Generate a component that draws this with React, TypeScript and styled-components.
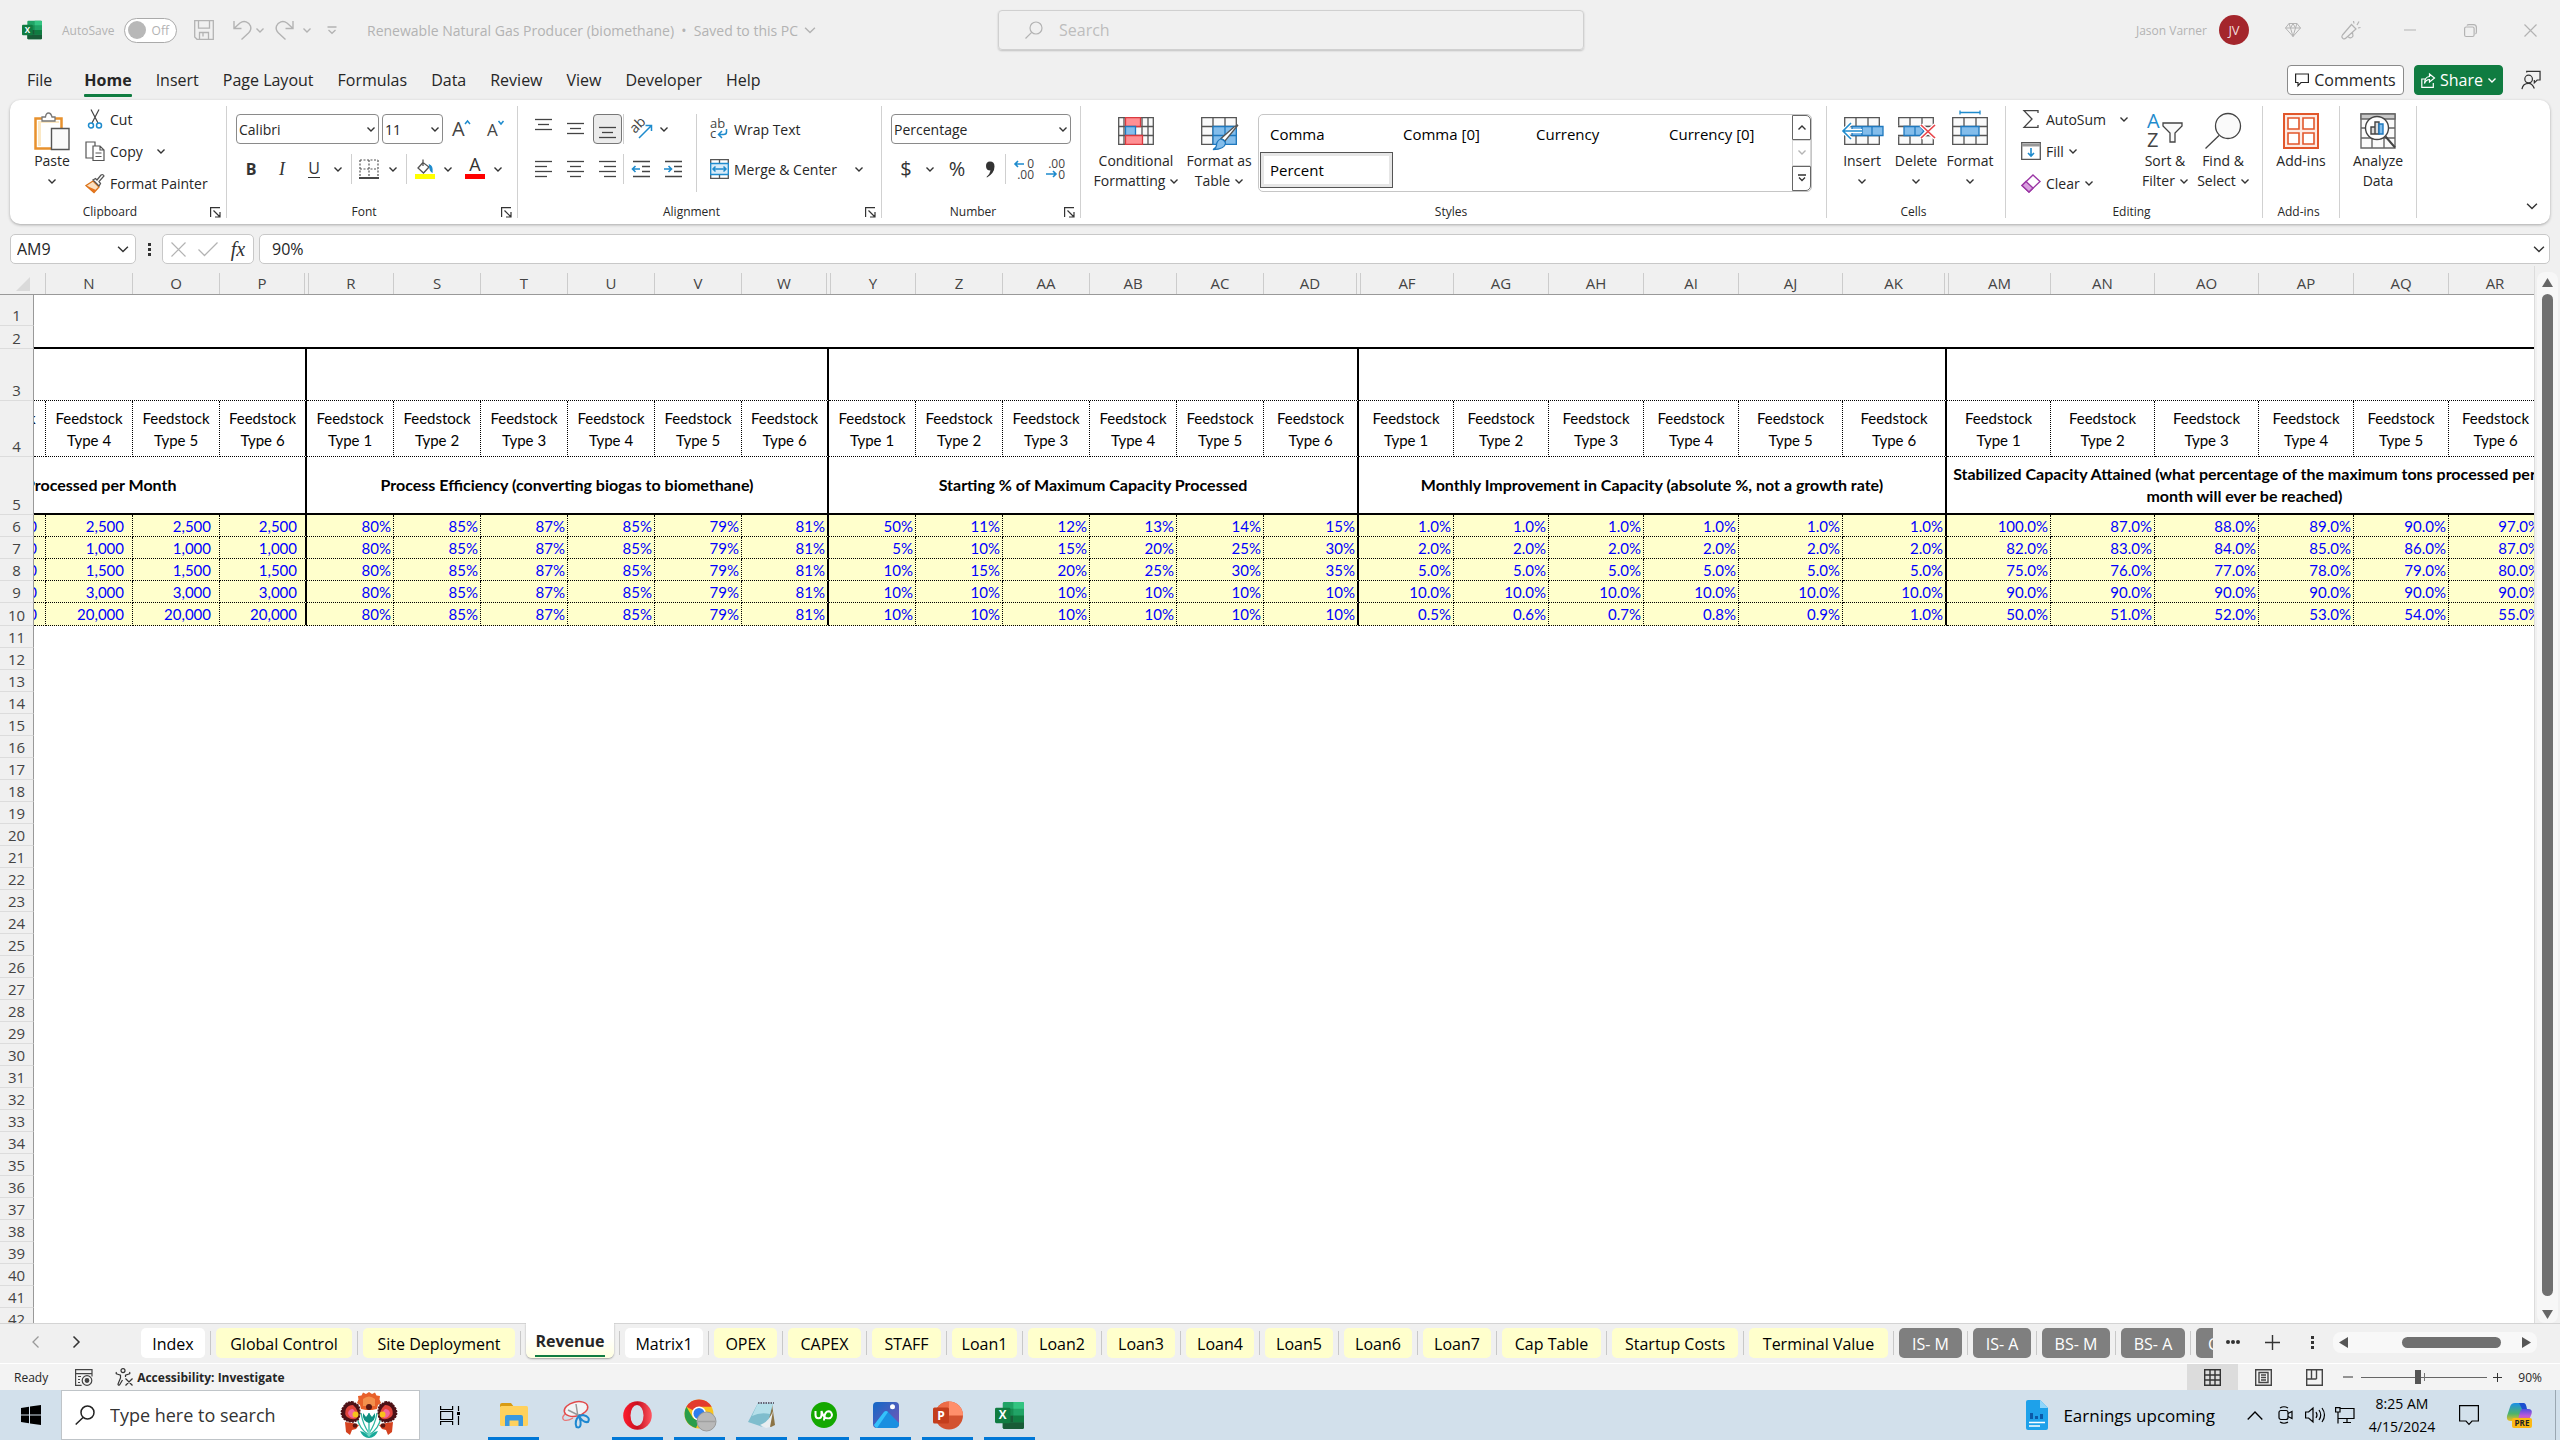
import React from 'react';
import styled, { createGlobalStyle, css } from 'styled-components';

const UI = '"Open Sans", "Noto Sans", sans-serif';
const CELL = 'Lato, "Open Sans", sans-serif';
const INK = '#262626';
const BLUE = '#1e8bcd';
const GREY = '#444';
const FAINT = '#b3b3b3';

const Global = createGlobalStyle`
  *, *::before, *::after { box-sizing: border-box; }
  html, body { margin: 0; padding: 0; }
  body { background: #f0f0f0; font-family: ${UI}; color: ${INK}; overflow: hidden; }
  button, input, select { font-family: inherit; color: inherit; margin: 0; }
  button { background: none; border: 0; padding: 0; cursor: default; }
  svg { display: block; flex: none; overflow: visible; }
`;

const Window = styled.div`
  height: 100vh;
  display: flex;
  flex-direction: column;
`;

/* ---------- shared parts ---------- */

const Slot = styled.button<{ $w: number }>`
  width: ${p => p.$w}px;
  height: 30px;
  flex: none;
  display: flex;
  align-items: center;
  justify-content: center;
`;
const Gap = styled.span<{ $w: number }>`
  width: ${p => p.$w}px;
  flex: none;
`;

type Stroke = { c?: string; w?: number };
const Chevron = ({ c = '#333', w = 8, up = false }: Stroke & { up?: boolean }) => (
  <svg width={w} height={w / 2 + 1} viewBox="0 0 8 5" fill="none" stroke={c} strokeWidth={w > 9 ? 1 : 1.4}>
    <path d={up ? 'M.5 4.5 4 1l3.5 3.5' : 'M.5.5 4 4 7.5.5'} />
  </svg>
);

/* ---------- title bar ---------- */

const TitleBar = styled.header`
  height: 60px;
  flex: none;
  padding-left: 22px;
  display: grid;
  grid-template-columns: 1fr 586px 1fr;
  align-items: center;
  color: ${FAINT};
  font-size: 14px;
`;
const TitleLeft = styled.div`
  display: flex;
  align-items: center;
`;
const TitleRight = styled(TitleLeft)`
  justify-content: flex-end;
`;
const AutoSaveLabel = styled.label`
  display: flex;
  align-items: center;
  margin-left: 20px;
  font-size: 12px;
`;
const AutoSaveText = styled.span`
  width: 62px;
`;
const ToggleBox = styled.input`
  appearance: none;
  width: 53px;
  height: 25px;
  border: 1px solid #aaa;
  border-radius: 13px;
  background: #fff;
  display: flex;
  align-items: center;
  padding: 0 7px 0 3px;
  justify-content: space-between;
  &::before {
    content: '';
    width: 18px;
    height: 18px;
    border-radius: 50%;
    background: #b8b8b8;
  }
  &::after {
    content: 'Off';
    font-size: 12px;
    color: ${FAINT};
  }
`;
const DocTitle = styled.span`
  margin: 0 6px 0 14px;
  white-space: pre;
`;
const SearchBox = styled.label`
  height: 40px;
  border: 1px solid #d0d0d0;
  border-radius: 4px;
  box-shadow: 0 1px 2px #0003;
  display: flex;
  align-items: center;
  padding-left: 26px;
  gap: 16px;
  input {
    flex: 1;
    border: 0;
    background: none;
    font-size: 16px;
    padding: 0;
    outline: 0;
  }
  input::placeholder { color: #bdbdbd; opacity: 1; }
`;
const Avatar = styled.span`
  width: 30px;
  height: 30px;
  border-radius: 50%;
  background: #a4262c;
  color: #f3dcdd;
  font-size: 13px;
  display: flex;
  align-items: center;
  justify-content: center;
  margin: 0 14px 0 12px;
`;
const UserName = styled.span`
  font-size: 12px;
`;

const ExcelIcon = ({ s }: { s: number }) => (
  <svg width={s} height={s} viewBox="0 0 30 30">
    <rect x="8" y="1" width="22" height="28" rx="1.5" fill="#21a366" />
    <path d="M19 1h9.5q1.500 0 1.500 1.500V8H19z" fill="#33c481" />
    <path d="M8 8h11v7H8z" fill="#107c41" opacity=".55" />
    <path d="M19 15h11v7H19z" fill="#107c41" />
    <path d="M8 15h11v7H8z" fill="#185c37" />
    <path d="M8 22h22v5.500q0 1.500-1.500 1.500h-19Q8 29 8 27.500z" fill="#185c37" />
    <rect x="0" y="7" width="16" height="16" rx="1.5" fill="#107c41" />
    <text x="8" y="19" textAnchor="middle" fontFamily="Open Sans" fontWeight="700" fontSize="12" fill="#fff">X</text>
  </svg>
);

const Title = () => (
  <TitleBar>
    <TitleLeft>
      <ExcelIcon s={20} />
      <AutoSaveLabel>
        <AutoSaveText>AutoSave</AutoSaveText>
        <ToggleBox type="checkbox" />
      </AutoSaveLabel>
      <Slot $w={54} aria-label="Save">
        <svg width="20" height="20" viewBox="0 0 20 20" fill="none" stroke={FAINT} strokeWidth="1.3">
          <path d="M.7.7h18.600v18.600H3L.7 17zM4.500.7v7.500h11V.7M5.500 19v-6.500h9V19M9 13v3.500" />
        </svg>
      </Slot>
      <Slot $w={22} aria-label="Undo">
        <svg width="18" height="20" viewBox="0 0 18 20" fill="none" stroke={FAINT} strokeWidth="1.4">
          <path d="M1 1v7.500h7.500M1.500 8 7 3c4-3 9-1 10.500 3 1 3 0 5-2 7l-7 6.500" />
        </svg>
      </Slot>
      <Slot $w={14} aria-label="Undo list"><Chevron c={FAINT} /></Slot>
      <Slot $w={36} aria-label="Redo">
        <svg width="18" height="20" viewBox="2 0 18 20" fill="none" stroke={FAINT} strokeWidth="1.4">
          <path d="M19 1v7.500h-7.500M18.500 8 13 3C9 0 4 2 2.500 6c-1 3 0 5 2 7l7 6.500" />
        </svg>
      </Slot>
      <Slot $w={8} aria-label="Redo list"><Chevron c={FAINT} /></Slot>
      <Slot $w={42} aria-label="Customize toolbar">
        <svg width="10" height="8" viewBox="0 0 10 8" fill="none" stroke={FAINT} strokeWidth="1.3"><path d="M.5 1h9M1.500 4 5 7.300 8.500 4" /></svg>
      </Slot>
      <DocTitle>{'Renewable Natural Gas Producer (biomethane)  •  Saved to this PC'}</DocTitle>
      <Chevron c={FAINT} w={12} />
    </TitleLeft>
    <SearchBox>
      <svg width="18" height="18" viewBox="0 0 18 18" fill="none" stroke={FAINT} strokeWidth="1.2"><circle cx="11" cy="7" r="6" /><path d="M6.700 11.300.5 17.500" /></svg>
      <input placeholder="Search" aria-label="Search" />
    </SearchBox>
    <TitleRight>
      <UserName>Jason Varner</UserName>
      <Avatar>JV</Avatar>
      <Slot $w={59} aria-label="Premium">
        <svg width="16" height="16" viewBox="0 0 16 16" fill="none" stroke={FAINT}><path d="M4 1.500h8L15.500 6 8 14.500.5 6zM.5 6h15M4 1.500 5.500 6 8 14.500 10.500 6 12 1.500M5.500 6 8 1.500 10.500 6" /></svg>
      </Slot>
      <Slot $w={58} aria-label="Draw">
        <svg width="20" height="20" viewBox="0 0 20 20" fill="none" stroke={FAINT} strokeWidth="1.2"><path d="M10.500 4.500 1.500 15q-1.500 2 .5 3.500 1.500 1 3-.5l10-9zM7 16.500q3 3 5-.5l-.5-3.500M13 3.500 12.500 1M16 5l2-3.500M17 8l2.500-.5" /></svg>
      </Slot>
      <Slot $w={60} aria-label="Minimize"><svg width="12" height="2"><path d="M0 1h12" stroke={FAINT} /></svg></Slot>
      <Slot $w={60} aria-label="Restore">
        <svg width="13" height="13" viewBox="0 0 13 13" fill="none" stroke={FAINT} strokeWidth="1.2"><rect x=".6" y="3" width="9.500" height="9.500" rx="1.500" /><path d="M3 1.500Q3.500.6 5 .6h4.500Q12.400.6 12.400 3.500V8q0 1.500-1 2" /></svg>
      </Slot>
      <Slot $w={60} aria-label="Close"><svg width="13" height="13"><path d="M.5.5l12 12M12.500.5l-12 12" stroke={FAINT} strokeWidth="1.2" /></svg></Slot>
    </TitleRight>
  </TitleBar>
);

/* ---------- ribbon tabs ---------- */

const TabRow = styled.nav`
  height: 40px;
  flex: none;
  display: flex;
  align-items: center;
  padding: 0 19px 0 15px;
`;
const RibbonTab = styled.button<{ $on?: boolean }>`
  height: 34px;
  padding: 0 12px;
  font-size: 16px;
  line-height: 34px;
  font-weight: ${p => (p.$on ? 700 : 400)};
  &::after {
    content: '';
    display: block;
    height: 3px;
    margin-top: -3px;
    border-radius: 1px;
    background: ${p => (p.$on ? '#107c41' : 'transparent')};
  }
  &:first-child { margin-right: 8px; }
`;
const Push = styled.span`
  margin-left: auto;
`;
const PillButton = styled.button<{ $solid?: boolean }>`
  height: 30px;
  width: ${p => (p.$solid ? 89 : 117)}px;
  border-radius: 4px;
  border: 1px solid ${p => (p.$solid ? '#107c41' : '#8a8a8a')};
  background: ${p => (p.$solid ? '#107c41' : '#fff')};
  color: ${p => (p.$solid ? '#fff' : INK)};
  font-size: 16px;
  display: flex;
  align-items: center;
  justify-content: center;
  gap: 5px;
  margin-right: ${p => (p.$solid ? 18 : 10)}px;
`;

const Tabs = () => (
  <TabRow>
    {['File', 'Home', 'Insert', 'Page Layout', 'Formulas', 'Data', 'Review', 'View', 'Developer', 'Help'].map(t => (
      <RibbonTab key={t} $on={t === 'Home'}>{t}</RibbonTab>
    ))}
    <Push />
    <PillButton>
      <svg width="14" height="14" viewBox="0 0 14 14" fill="none" stroke={INK} strokeWidth="1.2"><path d="M.6 1h12.800v8.500H6L3 12.700V9.500H.6z" /></svg>
      Comments
    </PillButton>
    <PillButton $solid>
      <svg width="14" height="15" viewBox="0 0 14 15" fill="none" stroke="#fff" strokeWidth="1.2"><path d="M5 6H.8v8.300h11.500V10M8.500 1l5 4-5 4V6.500Q5 6.500 3.500 10.500 3.500 4 8.500 3.500z" /></svg>
      Share
      <Chevron c="#fff" />
    </PillButton>
    <button aria-label="Collaborate">
      <svg width="20" height="20" viewBox="0 0 21 20" fill="none" stroke="#333" strokeWidth="1.3"><circle cx="8" cy="9" r="4" /><path d="M1 19.500Q2 13.500 8 13.500q4 0 6 5.500M6 2V1h14v9h-3l-3 3v-3" /></svg>
    </button>
  </TabRow>
);

/* ---------- ribbon ---------- */

const RibbonPanel = styled.section`
  height: 124px;
  flex: none;
  margin: 0 10px;
  padding: 6px 0;
  background: #fff;
  border-radius: 10px;
  box-shadow: 0 1px 3px #0000004d;
  display: flex;
`;
const Group = styled.div<{ $w: number }>`
  width: ${p => p.$w}px;
  flex: none;
  border-right: 1px solid #d1d1d1;
  display: flex;
  flex-direction: column;
`;
const GroupBody = styled.div<{ $pl?: number }>`
  flex: 1;
  display: flex;
  padding-left: ${p => p.$pl ?? 9}px;
`;
const GroupFoot = styled.div`
  height: 14px;
  font-size: 12px;
  line-height: 16px;
  display: flex;
  align-items: flex-end;
  text-align: center;
  padding-right: 5px;
`;
const GroupName = styled.span`
  flex: 1;
  height: 14px;
`;
const Rows = styled.div<{ $w?: number }>`
  display: flex;
  flex-direction: column;
  gap: 10px;
  padding-top: 8px;
  width: ${p => (p.$w ? p.$w + 'px' : 'auto')};
`;
const Line = styled.div`
  display: flex;
  align-items: center;
  height: 30px;
`;
const SmallStack = styled.div<{ $w: number }>`
  display: flex;
  flex-direction: column;
  gap: 6px;
  width: ${p => p.$w}px;
  flex: none;
`;
const SmallButton = styled.button`
  height: 26px;
  display: flex;
  align-items: center;
  gap: 5px;
  font-size: 14px;
  white-space: nowrap;
`;
const IconCell = styled.span`
  width: 20px;
  flex: none;
  display: flex;
  justify-content: center;
`;
const LabelIcon = styled.span`
  display: flex;
  align-items: center;
  gap: 5px;
`;
const BigButton = styled.button<{ $w: number }>`
  width: ${p => p.$w}px;
  flex: none;
  display: flex;
  flex-direction: column;
  align-items: center;
  padding-top: 4px;
  font-size: 14px;
  line-height: 20px;
  white-space: nowrap;
`;
const BigIcon = styled.span`
  height: 41px;
  display: flex;
  align-items: center;
`;
const BigLine = styled.span`
  height: 20px;
  display: flex;
  align-items: center;
  gap: 5px;
`;
const Sep = styled.span<{ $h?: number }>`
  width: 1px;
  height: ${p => p.$h ?? 30}px;
  margin: 0 1px 0 0;
  background: #cfcfcf;
  flex: none;
`;
const SelectWrap = styled.label<{ $w: number }>`
  width: ${p => p.$w}px;
  height: 30px;
  border: 1px solid #8a8a8a;
  border-radius: 4px;
  display: flex;
  align-items: center;
  padding-right: 3px;
  select {
    flex: 1;
    min-width: 0;
    appearance: none;
    border: 0;
    background: none;
    font-size: 14px;
    padding: 0 2px;
    outline: 0;
  }
`;
const Pressed = styled(Slot)`
  border: 1px solid #777;
  border-radius: 4px;
  background: #ebebeb;
`;
const ColorIcon = styled.span<{ $c: string }>`
  display: flex;
  flex-direction: column;
  align-items: center;
  justify-content: flex-end;
  height: 20px;
  width: 20px;
  border-bottom: 5px solid ${p => p.$c};
`;
const Glyph = styled.span<{ $s?: number; $b?: boolean; $i?: boolean; $u?: boolean }>`
  font-size: ${p => p.$s ?? 16}px;
  line-height: 20px;
  color: #333;
  font-weight: ${p => (p.$b ? 700 : 400)};
  ${p => p.$i && css`font-family: "Liberation Serif", serif; font-style: italic;`}
  ${p => p.$u && css`border-bottom: 1px solid #333; line-height: 17px;`}
`;

const Launcher = () => (
  <button aria-label="Dialog launcher">
    <svg width="11" height="11" viewBox="0 0 11 11" fill="none" stroke="#333" strokeWidth="1.2"><path d="M.6 10V.6H10M3.500 3.500l6 6M10 5v5H5" /></svg>
  </button>
);

const Drop = ({ w, name }: { w: number; name: string }) => <Slot $w={w} aria-label={name}><Chevron /></Slot>;

const Bars = ({ rows, y = 0 }: { rows: [number, number][]; y?: number }) => (
  <svg width="19" height="19" viewBox="0 0 19 19" stroke={GREY} strokeWidth="1.3">
    {rows.map(([x, len], i) => <path key={i} d={`M${x} ${y + 1.5 + i * 5}h${len}`} />)}
  </svg>
);

const Indent = ({ flip }: { flip?: boolean }) => (
  <svg width="19" height="19" viewBox="0 0 19 19" fill="none" stroke={GREY} strokeWidth="1.3">
    <path d="M1 1.500h17M10 6.500h8M10 11.500h8M1 16.500h17" />
    <path d={flip ? 'M0 9h7M4.500 6 7.500 9l-3 3' : 'M8 9H1M3.500 6 .5 9l3 3'} stroke={BLUE} strokeWidth="1.6" />
  </svg>
);

const GridBase = ({ children }: { children?: React.ReactNode }) => (
  <svg width="36" height="28" viewBox="0 0 36 28" fill="none" stroke="#555" strokeWidth="1.3">
    <path d="M.7.7h34.600v26.600H.7z" fill="#fafafa" />
    <path d="M.7 9.500h34.600M.7 18.500h34.600M12 .7v26.600M24 .7v26.600" />
    {children}
  </svg>
);

const NumberIcon = ({ inc }: { inc?: boolean }) => (
  <svg width="20" height="20" viewBox="0 0 20 20" fontFamily="Open Sans" fontSize="12" fill={GREY}>
    <text x="20" y="9" textAnchor="end">{inc ? '0' : '.00'}</text>
    <text x="20" y="20" textAnchor="end">{inc ? '.00' : '0'}</text>
    <path d={inc ? 'M10 5H1M4 2 1 5l3 3' : 'M1 15h10M8 12l3 3-3 3'} fill="none" stroke={BLUE} strokeWidth="1.6" />
  </svg>
);

const GalleryBox = styled.div`
  width: 554px;
  height: 78px;
  margin-top: 8px;
  border: 1px solid #c6c6c6;
  border-radius: 5px;
  display: flex;
`;
const GalleryGrid = styled.div`
  flex: 1;
  display: grid;
  grid-template-columns: repeat(4, 133px);
  grid-template-rows: 37px 36px;
  padding: 0 0 0 1px;
  overflow: hidden;
`;
const StyleItem = styled.button<{ $on?: boolean }>`
  text-align: left;
  padding-left: 9px;
  font-size: 15px;
  color: #000;
  border: 1px solid ${p => (p.$on ? '#555' : 'transparent')};
  box-shadow: ${p => (p.$on ? 'inset 0 0 0 3px #e6e6e6' : 'none')};
`;
const GalleryNav = styled.div`
  width: 19px;
  display: flex;
  flex-direction: column;
`;
const NavButton = styled.button<{ $off?: boolean }>`
  flex: 1;
  border: 1px solid ${p => (p.$off ? '#d6d6d6' : '#666')};
  display: flex;
  flex-direction: column;
  align-items: center;
  justify-content: center;
  &:first-child { border-top-right-radius: 5px; }
  &:last-child { border-bottom-right-radius: 5px; }
`;
const CollapseButton = styled.button`
  margin: auto 12px 8px auto;
`;

const Ribbon = () => (
  <RibbonPanel>
    <Group $w={217}>
      <GroupBody>
        <BigButton $w={66}>
          <BigIcon>
            <svg width="36" height="38" viewBox="0 0 36 38" fill="none">
              <path d="M1.500 6.500h26v30h-26z" fill="#fff" stroke="#e8912d" strokeWidth="2.5" />
              <path d="M4 9h21v25H4z" fill="#fbe8c4" />
              <path d="M7 11h18v6h-8v17H7z" fill="#fff" />
              <path d="M8 9V5h3.500Q12 1 14.500 1T18 5h3v4z" fill="#fff" stroke="#777" strokeWidth="1.3" />
              <path d="M17.500 16.500h17.500v21H17.500z" fill="#fafafa" stroke="#555" strokeWidth="1.4" />
            </svg>
          </BigIcon>
          <BigLine>Paste</BigLine>
          <BigLine><Chevron /></BigLine>
        </BigButton>
        <SmallStack $w={130}>
          <SmallButton>
            <IconCell>
              <svg width="14" height="20" viewBox="0 0 14 20" fill="none" stroke="#444" strokeWidth="1.2"><path d="M3 .5 10 14M11 .5 4 14" /><circle cx="3" cy="16.500" r="2.500" stroke={BLUE} strokeWidth="1.5" /><circle cx="11" cy="16.500" r="2.500" stroke={BLUE} strokeWidth="1.5" /></svg>
            </IconCell>
            Cut
          </SmallButton>
          <SmallButton>
            <IconCell>
              <svg width="20" height="20" viewBox="0 0 20 20" fill="#fff" stroke="#555" strokeWidth="1.2"><path d="M1 1h9v16H1z" /><path d="M8 5h7l4 4v10.500H8zM15 5v4h4M10.500 12h6M10.500 15.500h6" /></svg>
            </IconCell>
            Copy
            <Gap $w={4} /><Chevron />
          </SmallButton>
          <SmallButton>
            <IconCell>
              <svg width="20" height="19" viewBox="0 0 20 19" fill="none"><path d="M1 11.500 8 7l6 6-5 5.500z" fill="#fbe0c0" stroke="#d9731a" strokeWidth="1.3" /><path d="M1 11.500 9 18.500l2-2.500z" fill="#e8741c" /><path d="m8 6 2.500-1.500L12 6l4-5q2-1 3 1l-5 5.500 1.500 2L14 12z" fill="#fff" stroke="#555" strokeWidth="1.3" /></svg>
            </IconCell>
            Format Painter
          </SmallButton>
        </SmallStack>
      </GroupBody>
      <GroupFoot><GroupName>Clipboard</GroupName><Launcher /></GroupFoot>
    </Group>

    <Group $w={291}>
      <GroupBody>
        <Rows>
          <Line>
            <SelectWrap $w={143}><select aria-label="Font"><option>Calibri</option></select><Chevron /></SelectWrap>
            <Gap $w={3} />
            <SelectWrap $w={61}><select aria-label="Font size"><option>11</option></select><Chevron /></SelectWrap>
            <Slot $w={36} aria-label="Increase font size">
              <svg width="19" height="18" viewBox="0 0 19 18"><text x="0" y="16" fontFamily="Open Sans" fontSize="20" fill="#444">A</text><path d="m13 4 2.500-3L18 4" fill="none" stroke={BLUE} strokeWidth="1.5" /></svg>
            </Slot>
            <Slot $w={32} aria-label="Decrease font size">
              <svg width="17" height="18" viewBox="0 0 17 18"><text x="0" y="16" fontFamily="Open Sans" fontSize="17" fill="#444">A</text><path d="m11.500 1 2.500 3 2.500-3" fill="none" stroke={BLUE} strokeWidth="1.5" /></svg>
            </Slot>
          </Line>
          <Line>
            <Slot $w={30}><Glyph $b>B</Glyph></Slot>
            <Slot $w={32}><Glyph $i $s={18}>I</Glyph></Slot>
            <Slot $w={32}><Glyph $u>U</Glyph></Slot>
            <Drop w={16} name="Underline styles" />
            <Gap $w={5} /><Sep /><Gap $w={3} />
            <Slot $w={26} aria-label="Borders">
              <svg width="20" height="20" viewBox="0 0 20 20" fill="none" stroke="#555" strokeWidth="1.2"><path d="M1 1h18M1 10h18M1 1v17M10 1v17M19 1v17" strokeDasharray="2 1.500" /><path d="M0 19h20" stroke="#333" strokeWidth="1.8" /></svg>
            </Slot>
            <Drop w={22} name="Border styles" />
            <Gap $w={2} /><Sep />
            <Slot $w={34} aria-label="Fill color">
              <ColorIcon $c="#ffff00">
                <svg width="18" height="15" viewBox="0 0 18 15" fill="none" stroke="#555" strokeWidth="1.3"><path d="M7 3.500 2 9l5.500 5L13 8zM7 .5V7" /><path d="M13.500 6q3 1 2.500 7-2-1-2.500-7z" fill={BLUE} stroke={BLUE} /></svg>
              </ColorIcon>
            </Slot>
            <Drop w={12} name="Fill colors" />
            <Gap $w={6} />
            <Slot $w={30} aria-label="Font color"><ColorIcon $c="#ff0000"><Glyph $s={18}>A</Glyph></ColorIcon></Slot>
            <Drop w={16} name="Font colors" />
          </Line>
        </Rows>
      </GroupBody>
      <GroupFoot><GroupName>Font</GroupName><Launcher /></GroupFoot>
    </Group>

    <Group $w={364}>
      <GroupBody>
        <Rows $w={169}>
          <Line>
            <Slot $w={32} aria-label="Top align"><Bars y={-2} rows={[[1, 17], [4, 11], [1, 17]]} /></Slot>
            <Slot $w={32} aria-label="Middle align"><Bars y={2} rows={[[1, 17], [4, 11], [1, 17]]} /></Slot>
            <Gap $w={2} />
            <Pressed $w={29} aria-label="Bottom align"><Bars y={6} rows={[[1, 17], [4, 11], [1, 17]]} /></Pressed>
            <Gap $w={1} /><Sep />
            <Slot $w={34} aria-label="Orientation">
              <svg width="22" height="20" viewBox="0 0 22 20"><text x="1" y="12" transform="rotate(-45 6 10)" fontFamily="Open Sans" fontSize="14" fill="#444">ab</text><path d="M8 19 20 7M14.500 6.500H20.500V12" fill="none" stroke={BLUE} strokeWidth="1.5" /></svg>
            </Slot>
            <Drop w={10} name="Orientation list" />
          </Line>
          <Line>
            <Slot $w={32} aria-label="Align left"><Bars rows={[[1, 17], [1, 12], [1, 17], [1, 12]]} /></Slot>
            <Slot $w={32} aria-label="Center"><Bars rows={[[1, 17], [4, 11], [1, 17], [4, 11]]} /></Slot>
            <Slot $w={32} aria-label="Align right"><Bars rows={[[1, 17], [6, 12], [1, 17], [6, 12]]} /></Slot>
            <Sep />
            <Slot $w={32} aria-label="Decrease indent"><Indent /></Slot>
            <Slot $w={32} aria-label="Increase indent"><Indent flip /></Slot>
          </Line>
        </Rows>
        <Rows><Sep $h={78} /></Rows>
        <Gap $w={11} />
        <Rows>
          <Line>
            <SmallButton>
              <IconCell>
                <svg width="18" height="20" viewBox="0 0 18 20" fontFamily="Open Sans" fontSize="13" fill="#444"><text x="0" y="9">ab</text><text x="0" y="19">c</text><path d="M16.500 10v3q0 2.500-3 2.500H9M12 12l-3.500 3.500L12 19" fill="none" stroke={BLUE} strokeWidth="1.5" /></svg>
              </IconCell>
              Wrap Text
            </SmallButton>
          </Line>
          <Line>
            <SmallButton>
              <IconCell>
                <svg width="19" height="20" viewBox="0 0 19 20" fill="none" stroke="#555" strokeWidth="1.3"><path d="M.7.7h17.600v18.600H.7zM9.500.7v18.600" /><path d="M.7 4.500h17.600v11H.7z" fill="#d8ebf8" stroke={BLUE} /><path d="M3 10h13M5.500 7.500 3 10l2.500 2.500M13.500 7.500 16 10l-2.500 2.500" stroke={BLUE} strokeWidth="1.5" /></svg>
              </IconCell>
              Merge &amp; Center
              <Gap $w={8} /><Chevron />
            </SmallButton>
          </Line>
        </Rows>
      </GroupBody>
      <GroupFoot><GroupName>Alignment</GroupName><Launcher /></GroupFoot>
    </Group>

    <Group $w={199}>
      <GroupBody>
        <Rows>
          <Line>
            <SelectWrap $w={180}><select aria-label="Number format"><option>Percentage</option></select><Chevron /></SelectWrap>
          </Line>
          <Line>
            <Slot $w={30}><Glyph $s={20}>$</Glyph></Slot>
            <Drop w={18} name="Currency list" />
            <Slot $w={36}><Glyph $s={20}>%</Glyph></Slot>
            <Slot $w={30} aria-label="Comma style">
              <svg width="10" height="17" viewBox="0 0 10 17"><path d="M5 .5q4.500 0 4.500 5Q9.500 12 2 16.500L1.500 16Q5 13 5.500 9.500 1 9.500 1 5T5 .5z" fill="#333" /></svg>
            </Slot>
            <Sep />
            <Slot $w={34} aria-label="Increase decimal"><NumberIcon inc /></Slot>
            <Slot $w={28} aria-label="Decrease decimal"><NumberIcon /></Slot>
          </Line>
        </Rows>
      </GroupBody>
      <GroupFoot><GroupName>Number</GroupName><Launcher /></GroupFoot>
    </Group>

    <Group $w={746}>
      <GroupBody $pl={11}>
        <BigButton $w={88}>
          <BigIcon>
            <GridBase>
              <path d="M30 .7v26.600M6 .7v26.600" />
              <path d="M7.500.7h15v8.800h-15z" fill="#ff8f93" stroke="#d93a3f" />
              <path d="M7.500 9.500h10v9h-10z" fill="#83bdeb" stroke="#1e78be" />
              <path d="M7.500 18.500h17v8.800h-17z" fill="#ff8f93" stroke="#d93a3f" />
            </GridBase>
          </BigIcon>
          <BigLine>Conditional</BigLine>
          <BigLine>Formatting <Chevron /></BigLine>
        </BigButton>
        <BigButton $w={78}>
          <BigIcon>
            <GridBase>
              <path d="M12 9.500h23.300v17.800H12z" fill="#83bdeb" stroke="#1e78be" />
              <path d="M24 9.500v17.800M12 18.500h23.300" stroke="#1e78be" />
              <path d="M37 8 24 24l-4-2.500L33 10z" fill="#fff" stroke="#555" />
              <path d="M20 22q4 1 4.500 4.500-1 6-12.500 6 4-2 3.500-5.500 1-4 4.500-5z" fill="#83bdeb" stroke="#1e78be" />
            </GridBase>
          </BigIcon>
          <BigLine>Format as</BigLine>
          <BigLine>Table <Chevron /></BigLine>
        </BigButton>
        <GalleryBox>
          <GalleryGrid>
            <StyleItem>Comma</StyleItem>
            <StyleItem>Comma [0]</StyleItem>
            <StyleItem>Currency</StyleItem>
            <StyleItem>Currency [0]</StyleItem>
            <StyleItem $on>Percent</StyleItem>
          </GalleryGrid>
          <GalleryNav>
            <NavButton aria-label="Previous styles"><Chevron up /></NavButton>
            <NavButton $off aria-label="Next styles"><Chevron c="#b5b5b5" /></NavButton>
            <NavButton aria-label="More styles">
              <svg width="8" height="8" viewBox="0 0 8 8" fill="none" stroke="#333" strokeWidth="1.3"><path d="M0 1h8M1 3.500l3 3 3-3" /></svg>
            </NavButton>
          </GalleryNav>
        </GalleryBox>
      </GroupBody>
      <GroupFoot><GroupName>Styles</GroupName></GroupFoot>
    </Group>

    <Group $w={179}>
      <GroupBody $pl={8}>
        <BigButton $w={54}>
          <BigIcon>
            <GridBase>
              <path d="M8 9.500h31v9H8z" fill="#83bdeb" stroke="#1e78be" />
              <path d="M18 9.500v9M28 9.500v9" stroke="#1e78be" />
              <path d="M18 14H-1M7 6-1 14l8 8" stroke="#fff" strokeWidth="4" />
              <path d="M18 14H-1M7 6-1 14l8 8" stroke={BLUE} strokeWidth="1.6" />
            </GridBase>
          </BigIcon>
          <BigLine>Insert</BigLine>
          <BigLine><Chevron /></BigLine>
        </BigButton>
        <BigButton $w={54}>
          <BigIcon>
            <GridBase>
              <path d="M-1 9.500h38v9H-1z" fill="#fff" stroke="#fff" />
              <path d="M0 9.500h12M0 18.500h12M24 9.500h12M24 18.500h12" />
              <path d="M6 9.500h16l4 4.500-4 4.500H6z" fill="#83bdeb" stroke="#1e78be" /><path d="M17 9.500v9" stroke="#1e78be" />
              <path d="m23 8 14 13M37 8 23 21" stroke="#fff" strokeWidth="4" />
              <path d="m23 8 14 13M37 8 23 21" stroke="#e8444a" strokeWidth="1.7" />
            </GridBase>
          </BigIcon>
          <BigLine>Delete</BigLine>
          <BigLine><Chevron /></BigLine>
        </BigButton>
        <BigButton $w={54}>
          <BigIcon>
            <GridBase>
              <path d="M9 9.500h18v9H9z" fill="#83bdeb" stroke="#1e78be" />
              <path d="M8 -4.500h20M8-6.500v4M28-6.500v4" stroke={BLUE} />
            </GridBase>
          </BigIcon>
          <BigLine>Format</BigLine>
          <BigLine><Chevron /></BigLine>
        </BigButton>
      </GroupBody>
      <GroupFoot><GroupName>Cells</GroupName></GroupFoot>
    </Group>

    <Group $w={257}>
      <GroupBody $pl={15}>
        <SmallStack $w={115}>
          <SmallButton>
            <IconCell><svg width="16" height="18" viewBox="0 0 16 18" fill="none" stroke="#444" strokeWidth="1.3"><path d="M15 3V.7H1L9 9l-8 8.300h14V15" /></svg></IconCell>
            AutoSum
            <Gap $w={4} /><Chevron />
          </SmallButton>
          <SmallButton>
            <IconCell><svg width="20" height="18" viewBox="0 0 20 18" fill="none" stroke="#555" strokeWidth="1.3"><path d="M.7.7h18.600v16.600H.7z" /><path d="M.7 3h18.600" strokeWidth="3" stroke="#999" /><path d="M10 6v8M7 11l3 3 3-3" stroke={BLUE} strokeWidth="1.6" /></svg></IconCell>
            <LabelIcon>Fill <Chevron /></LabelIcon>
          </SmallButton>
          <SmallButton>
            <IconCell><svg width="20" height="19" viewBox="0 0 20 19" fill="#fff" stroke="#9b37a5" strokeWidth="1.4"><path d="M12 1l7 6.500L8 18l-7-6.500z" /><path d="m5 7.500 7 6.500-4 4-7-6.500z" fill="#d9a0df" /></svg></IconCell>
            <LabelIcon>Clear <Chevron /></LabelIcon>
          </SmallButton>
        </SmallStack>
        <BigButton $w={58}>
          <BigIcon>
            <svg width="36" height="36" viewBox="0 0 36 36" fontFamily="Open Sans" fontSize="20"><text x="0" y="15" fill={BLUE}>A</text><text x="0" y="34" fill="#444">Z</text><path d="M16 10h19v3l-7 7v9h-5v-9l-7-7z" fill="#fafafa" stroke="#444" strokeWidth="1.3" /></svg>
          </BigIcon>
          <BigLine>Sort &amp;</BigLine>
          <BigLine>Filter <Chevron /></BigLine>
        </BigButton>
        <BigButton $w={58}>
          <BigIcon>
            <svg width="36" height="36" viewBox="0 0 36 36" fill="#fafafa" stroke="#444" strokeWidth="1.3"><circle cx="23" cy="13" r="12.500" /><path d="M14 22.500.5 35.500" /></svg>
          </BigIcon>
          <BigLine>Find &amp;</BigLine>
          <BigLine>Select <Chevron /></BigLine>
        </BigButton>
      </GroupBody>
      <GroupFoot><GroupName>Editing</GroupName></GroupFoot>
    </Group>

    <Group $w={77}>
      <GroupBody $pl={0}>
        <BigButton $w={76}>
          <BigIcon>
            <svg width="36" height="36" viewBox="0 0 36 36" fill="#fff" stroke="#e2572b" strokeWidth="1.6"><path d="M1 1h34v34H1z" fill="#fdebe4" strokeWidth="2" /><path d="M5 5h11v11H5zM20 5h11v11H20zM5 20h11v11H5zM20 20h11v11H20z" /></svg>
          </BigIcon>
          <BigLine>Add-ins</BigLine>
        </BigButton>
      </GroupBody>
      <GroupFoot><GroupName>Add-ins</GroupName></GroupFoot>
    </Group>

    <Group $w={77}>
      <GroupBody $pl={0}>
        <BigButton $w={76}>
          <BigIcon>
            <svg width="36" height="36" viewBox="0 0 36 36" fill="none" stroke="#666" strokeWidth="1.4"><path d="M1 1h34v34H1z" fill="#fafafa" /><path d="M1 1h34v5H1z" fill="#c8c8c8" /><path d="M1 15h34M1 25h34M12 6v29M24 6v29" /><circle cx="17" cy="15" r="11.500" fill="#fff" stroke="#444" /><path d="m25.500 23.500 9.500 11" stroke="#444" strokeWidth="2" /><path d="M11 14h4v7h-4zM15 9h4v12h-4z" fill="#ddd" stroke="#444" /><path d="M19 11h4v10h-4z" fill="#83bdeb" stroke="#1e78be" /></svg>
          </BigIcon>
          <BigLine>Analyze</BigLine>
          <BigLine>Data</BigLine>
        </BigButton>
      </GroupBody>
    </Group>
    <CollapseButton aria-label="Collapse ribbon"><Chevron w={12} /></CollapseButton>
  </RibbonPanel>
);

/* ---------- formula bar ---------- */

const FormulaRow = styled.div`
  display: flex;
  flex: none;
  padding: 10px 10px 2px;
`;
const Field = styled.label<{ $w?: number }>`
  height: 30px;
  ${p => (p.$w ? `width: ${p.$w}px; flex: none;` : 'flex: 1;')}
  border: 1px solid #c8c8c8;
  border-radius: 5px;
  background: #fff;
  display: flex;
  align-items: center;
  padding: 0 6px;
  input {
    flex: 1;
    min-width: 0;
    border: 0;
    padding: 0;
    background: none;
    font-size: 16px;
    outline: 0;
  }
`;
const FormulaField = styled(Field)`
  padding: 0 4px 0 12px;
`;
const FxBox = styled.div`
  width: 92px;
  height: 30px;
  border: 1px solid #c8c8c8;
  border-radius: 5px;
  background: #fff;
  display: flex;
  align-items: center;
  margin-right: 5px;
`;
const DotsHandle = styled.span`
  width: 26px;
  display: flex;
  align-items: center;
  justify-content: center;
`;
const DotsIcon = () => (
  <svg width="3" height="13" fill="#333"><path d="M0 0h3v3H0zM0 5h3v3H0zM0 10h3v3H0z" /></svg>
);

const FormulaBar = () => (
  <FormulaRow>
    <Field $w={126}>
      <input defaultValue="AM9" aria-label="Name box" />
      <Chevron w={12} />
    </Field>
    <DotsHandle><DotsIcon /></DotsHandle>
    <FxBox>
      <Slot $w={30} aria-label="Cancel"><svg width="15" height="15"><path d="m.5.5 14 14M14.500.5l-14 14" stroke={FAINT} strokeWidth="1.2" /></svg></Slot>
      <Slot $w={30} aria-label="Enter"><svg width="20" height="14" fill="none"><path d="m.5 7.500 6 6L19.500.5" stroke={FAINT} strokeWidth="1.3" /></svg></Slot>
      <Slot $w={30}><Glyph $i $s={20}>fx</Glyph></Slot>
    </FxBox>
    <FormulaField>
      <input defaultValue="90%" aria-label="Formula" />
      <Chevron w={12} />
    </FormulaField>
  </FormulaRow>
);

/* ---------- worksheet ---------- */

type Col = { name: string; w: number; last?: boolean };
const span = (names: string, w: number | number[]): Col[] =>
  names.split(' ').map((name, i, all) => ({
    name,
    w: Array.isArray(w) ? w[i] : w,
    last: i === all.length - 1,
  }));

type Block = { title: string; cols: Col[]; rows: string[]; first: number; pad: number; bleed?: number };
const BLOCKS: Block[] = [
  {
    title: 'Maximum Tons Processed per Month',
    cols: span('M N O P', [12, 87, 87, 87]),
    first: 3,
    pad: 8,
    bleed: 249,
    rows: ['2,500 2,500 2,500 2,500', '1,000 1,000 1,000 1,000', '1,500 1,500 1,500 1,500', '3,000 3,000 3,000 3,000', '20,000 20,000 20,000 20,000'],
  },
  {
    title: 'Process Efficiency (converting biogas to biomethane)',
    cols: span('R S T U V W', 87),
    first: 1,
    pad: 2,
    rows: Array(5).fill('80% 85% 87% 85% 79% 81%'),
  },
  {
    title: 'Starting % of Maximum Capacity Processed',
    cols: span('Y Z AA AB AC AD', [87, 87, 87, 87, 87, 95]),
    first: 1,
    pad: 2,
    rows: ['50% 11% 12% 13% 14% 15%', '5% 10% 15% 20% 25% 30%', '10% 15% 20% 25% 30% 35%', '10% 10% 10% 10% 10% 10%', '10% 10% 10% 10% 10% 10%'],
  },
  {
    title: 'Monthly Improvement in Capacity (absolute %, not a growth rate)',
    cols: span('AF AG AH AI AJ AK', [95, 95, 95, 95, 104, 104]),
    first: 1,
    pad: 2,
    rows: [
      '1.0% 1.0% 1.0% 1.0% 1.0% 1.0%',
      '2.0% 2.0% 2.0% 2.0% 2.0% 2.0%',
      '5.0% 5.0% 5.0% 5.0% 5.0% 5.0%',
      '10.0% 10.0% 10.0% 10.0% 10.0% 10.0%',
      '0.5% 0.6% 0.7% 0.8% 0.9% 1.0%',
    ],
  },
  {
    title: 'Stabilized Capacity Attained (what percentage of the maximum tons processed per month will ever be reached)',
    cols: span('AM AN AO AP AQ AR', [104, 104, 104, 95, 95, 95]),
    first: 1,
    pad: 2,
    rows: [
      '100.0% 87.0% 88.0% 89.0% 90.0% 97.0%',
      '82.0% 83.0% 84.0% 85.0% 86.0% 87.0%',
      '75.0% 76.0% 77.0% 78.0% 79.0% 80.0%',
      '90.0% 90.0% 90.0% 90.0% 90.0% 90.0%',
      '50.0% 51.0% 52.0% 53.0% 54.0% 55.0%',
    ],
  },
];
const COLS = BLOCKS.flatMap(b => b.cols);
const HEAD_W = 34;
const TABLE_W = HEAD_W + COLS.reduce((s, c) => s + c.w, 0);

const SheetArea = styled.main`
  flex: 1;
  min-height: 0;
  display: flex;
`;
const SheetView = styled.div`
  flex: 1;
  min-width: 0;
  overflow: hidden;
  background: #fff;
`;
const Grid = styled.table`
  width: ${TABLE_W}px;
  table-layout: fixed;
  border-collapse: separate;
  border-spacing: 0;
  font-family: ${CELL};
  font-size: 15px;
  line-height: 22px;
  color: #000;
  th, td { padding: 0; }
`;
const ColHead = styled.th`
  height: 29px;
  background: #f0f0f0;
  border-bottom: 1px solid #999;
  font: 400 15px/21px ${UI};
  color: ${GREY};
  vertical-align: bottom;
`;
const HeadLabel = styled.span<{ $first?: boolean; $last?: boolean }>`
  display: block;
  height: 21px;
  border-right: 1px solid #ccc;
  ${p => p.$last && css`margin-right: 2px;`}
  ${p => p.$first && css`margin-left: 1px; border-left: 1px solid #ccc;`}
`;
const Corner = styled(ColHead)`
  svg { margin: 0 0 3px 16px; }
`;
const RowHead = styled.th<{ $h: number }>`
  height: ${p => p.$h}px;
  background: #f0f0f0;
  border-right: 1px solid #999;
  border-bottom: 1px solid #dcdcdc;
  font: 400 15px/20px ${UI};
  color: ${GREY};
  vertical-align: bottom;
`;
const Blank = styled.td<{ $rule?: boolean }>`
  ${p => p.$rule && css`border-bottom: 2px solid #000;`}
`;
const cellEdge = css<{ $last?: boolean }>`
  border-right: ${p => (p.$last ? '2px solid #000' : '1px dotted #000')};
`;
const Band = styled.td<{ $last?: boolean }>`
  ${cellEdge}
  border-bottom: 1px dotted #000;
`;
const TypeCell = styled.th<{ $last?: boolean }>`
  ${cellEdge}
  border-bottom: 1px dotted #000;
  font-weight: 400;
  text-align: center;
  overflow: hidden;
`;
const BandTitle = styled.th<{ $last?: boolean }>`
  ${cellEdge}
  border-bottom: 2px solid #000;
  font-weight: 700;
  font-size: 16px;
  text-align: center;
  overflow: hidden;
`;
const Value = styled.td<{ $last?: boolean; $pad: number }>`
  ${cellEdge}
  border-bottom: 1px dotted #000;
  background: #ffffcc;
  color: #0000ff;
  text-align: right;
  line-height: 20px;
  overflow: hidden;
  white-space: nowrap;
  && { padding-right: ${p => p.$pad}px; }
`;
/* Lets a cell scrolled half out of view keep its full width to the left. */
const Bleed = styled.div<{ $by: number }>`
  margin-left: -${p => p.$by}px;
`;

const ScrollRail = styled.div`
  width: 26px;
  flex: none;
  padding: 6px 2px 0;
  border-left: 1px solid #dcdcdc;
`;
const RailBody = styled.div`
  height: 100%;
  background: #f7f7f7;
  border-radius: 8px;
  display: flex;
  flex-direction: column;
  align-items: center;
  gap: 7px;
  padding: 6px 0 4px;
`;
const RailThumb = styled.div`
  width: 11px;
  flex: 1;
  border-radius: 6px;
  background: #707070;
`;
const Arrow = ({ d }: { d: string }) => <svg width="11" height="9" viewBox="0 0 11 9" fill="#666"><path d={d} /></svg>;

const Sheet = () => (
  <SheetArea>
    <SheetView>
      <Grid>
        <colgroup>
          <col style={{ width: HEAD_W }} />
          {COLS.map(c => <col key={c.name} style={{ width: c.w }} />)}
        </colgroup>
        <thead>
          <tr>
            <Corner aria-label="Select all"><svg width="14" height="14"><path d="M14 0v14H0z" fill="#dadada" /></svg></Corner>
            {BLOCKS.map((b, bi) => b.cols.map((c, i) => (
              <ColHead key={c.name} scope="col" aria-label={c.name}>
                <HeadLabel $last={c.last} $first={bi > 0 && i === 0}>{c.w > 20 ? c.name : ''}</HeadLabel>
              </ColHead>
            )))}
          </tr>
        </thead>
        <tbody>
          <tr><RowHead $h={31}>1</RowHead><Blank colSpan={COLS.length} /></tr>
          <tr><RowHead $h={23}>2</RowHead><Blank $rule colSpan={COLS.length} /></tr>
          <tr>
            <RowHead $h={52}>3</RowHead>
            {BLOCKS.map((b, bi) => <Band key={bi} $last colSpan={b.cols.length} />)}
          </tr>
          <tr>
            <RowHead $h={56}>4</RowHead>
            {BLOCKS.map(b => b.cols.map((c, i) => (
              <TypeCell key={c.name} $last={c.last}>
                <Bleed $by={c.w < 20 ? 75 : 0}>Feedstock<br />Type {b.first + i}</Bleed>
              </TypeCell>
            )))}
          </tr>
          <tr>
            <RowHead $h={58}>5</RowHead>
            {BLOCKS.map(b => (
              <BandTitle key={b.title} $last colSpan={b.cols.length}>
                <Bleed $by={b.bleed ?? 0}>{b.title}</Bleed>
              </BandTitle>
            ))}
          </tr>
          {[0, 1, 2, 3, 4].map(r => (
            <tr key={r}>
              <RowHead $h={r === 4 ? 23 : 22}>{r + 6}</RowHead>
              {BLOCKS.map(b => b.rows[r].split(' ').map((v, i) => (
                <Value key={b.cols[i].name} $last={b.cols[i].last} $pad={b.pad}>
                  <Bleed $by={b.cols[i].w < 20 ? 75 : 0}>{v}</Bleed>
                </Value>
              )))}
            </tr>
          ))}
          {Array.from({ length: 32 }, (_, i) => (
            <tr key={i}><RowHead $h={22}>{i + 11}</RowHead><Blank colSpan={COLS.length} /></tr>
          ))}
        </tbody>
      </Grid>
    </SheetView>
    <ScrollRail>
      <RailBody>
        <Arrow d="M5.500 0 11 9H0z" />
        <RailThumb />
        <Gap $w={1} />
        <Arrow d="M5.500 9 11 0H0z" />
      </RailBody>
    </ScrollRail>
  </SheetArea>
);

/* ---------- sheet tabs ---------- */

const TabsBar = styled.nav`
  height: 40px;
  flex: none;
  display: flex;
  box-shadow: inset 0 1px #d4d4d4;
  padding: 0 23px 0 15px;
`;
const TabStrip = styled.div`
  flex: 1;
  min-width: 0;
  margin-left: 44px;
  display: flex;
  overflow: hidden;
`;
const TONES = { plain: '#fff', yellow: '#ffffcc', grey: '#7f7f7f' };
type Tone = keyof typeof TONES;
const SheetTab = styled.button<{ $w: number; $tone: Tone; $on?: boolean }>`
  width: ${p => p.$w}px;
  height: 30px;
  margin-top: 5px;
  flex: none;
  border-radius: 5px;
  background: ${p => TONES[p.$tone]};
  color: ${p => (p.$tone === 'grey' ? '#fff' : '#000')};
  font-size: 16px;
  line-height: 32px;
  white-space: nowrap;
  ${p => p.$on && css`
    height: 35px;
    margin-top: 0;
    border-radius: 0 0 6px 6px;
    background: linear-gradient(#fff 40%, #ffffe0);
    box-shadow: 0 1px 2px #0005;
    font-weight: 700;
    color: ${INK};
  `}
`;
const ActiveLabel = styled.span`
  display: inline-block;
  line-height: 28px;
  border-bottom: 2px solid #107c41;
`;
const TabDivider = styled.span`
  width: 1px;
  height: 24px;
  margin: 8px 5px 0;
  background: #c8c8c8;
  flex: none;
`;
const BarSlot = styled(Slot)`
  height: 38px;
`;
const HScroll = styled.div`
  width: 204px;
  height: 21px;
  margin-top: 9px;
  border-radius: 8px;
  background: #f8f8f8;
  display: flex;
  align-items: center;
  padding: 0 6px;
`;
const HThumb = styled.div`
  width: 99px;
  height: 11px;
  border-radius: 6px;
  background: #707070;
  margin: 0 21px 0 auto;
`;
const SHEETS: [string, number, Tone][] = [
  ['Index', 64, 'plain'], ['Global Control', 136, 'yellow'], ['Site Deployment', 152, 'yellow'], ['Revenue', 88, 'plain'],
  ['Matrix1', 78, 'plain'], ['OPEX', 63, 'yellow'], ['CAPEX', 73, 'yellow'], ['STAFF', 69, 'yellow'], ['Loan1', 65, 'yellow'],
  ['Loan2', 68, 'yellow'], ['Loan3', 68, 'yellow'], ['Loan4', 68, 'yellow'], ['Loan5', 68, 'yellow'], ['Loan6', 68, 'yellow'],
  ['Loan7', 68, 'yellow'], ['Cap Table', 99, 'yellow'], ['Startup Costs', 126, 'yellow'], ['Terminal Value', 139, 'yellow'],
  ['IS- M', 63, 'grey'], ['IS- A', 58, 'grey'], ['BS- M', 68, 'grey'], ['BS- A', 64, 'grey'], ['CF- M', 66, 'grey'],
];

const SheetTabs = () => (
  <TabsBar>
    <BarSlot $w={40} aria-label="Previous sheet"><svg width="7" height="12" fill="none"><path d="M6.500.5 1 6l5.500 5.500" stroke="#999" strokeWidth="1.3" /></svg></BarSlot>
    <BarSlot $w={42} aria-label="Next sheet"><svg width="7" height="12" fill="none"><path d="M.5.5 6 6 .5 11.500" stroke="#333" strokeWidth="1.5" /></svg></BarSlot>
    <TabStrip>
      {SHEETS.map(([name, w, tone], i) => (
        <React.Fragment key={name}>
          {i > 0 && <TabDivider />}
          <SheetTab $w={w} $tone={tone} $on={name === 'Revenue'}>
            {name === 'Revenue' ? <ActiveLabel>{name}</ActiveLabel> : name}
          </SheetTab>
        </React.Fragment>
      ))}
    </TabStrip>
    <BarSlot $w={39} aria-label="All sheets"><svg width="14" height="4" fill="#333"><circle cx="2" cy="2" r="2" /><circle cx="7" cy="2" r="2" /><circle cx="12" cy="2" r="2" /></svg></BarSlot>
    <BarSlot $w={40} aria-label="New sheet"><svg width="15" height="15"><path d="M7.500 0v15M0 7.500h15" stroke="#333" strokeWidth="1.4" /></svg></BarSlot>
    <BarSlot $w={41} aria-label="Resize tabs"><DotsIcon /></BarSlot>
    <HScroll>
      <svg width="9" height="11" fill="#555"><path d="M0 5.500 9 0v11z" /></svg>
      <HThumb />
      <svg width="9" height="11" fill="#555"><path d="M9 5.500 0 0v11z" /></svg>
    </HScroll>
  </TabsBar>
);

/* ---------- status bar ---------- */

const StatusBar = styled.footer`
  height: 27px;
  flex: none;
  border-top: 1px solid #fff;
  background: #f3f3f3;
  display: flex;
  align-items: center;
  padding: 0 18px 0 14px;
  font-size: 12px;
`;
const Access = styled.button`
  display: flex;
  align-items: center;
  gap: 4px;
  margin-left: 22px;
  font-size: 12px;
  font-weight: 700;
`;
const Macro = styled.button`
  margin-left: 27px;
`;
const ViewButton = styled.button<{ $on?: boolean }>`
  width: 51px;
  height: 26px;
  display: flex;
  align-items: center;
  justify-content: center;
  background: ${p => (p.$on ? '#dcdcdc' : 'transparent')};
`;
const ZoomRange = styled.input`
  appearance: none;
  width: 126px;
  height: 16px;
  background:
    linear-gradient(#777, #777) center / 1px 8px no-repeat,
    linear-gradient(#666, #666) center / 100% 1px no-repeat;
  && { margin: 0 5px; }
  &::-webkit-slider-thumb {
    appearance: none;
    width: 6px;
    height: 14px;
    background: #555;
  }
`;
const ZoomValue = styled.span`
  margin-left: 16px;
`;

const Status = () => (
  <StatusBar>
    Ready
    <Macro aria-label="Record macro">
      <svg width="18" height="17" viewBox="0 0 18 17" fill="none" stroke="#444" strokeWidth="1.2"><path d="M.6.600h16.400v4H.6zM.6 4.600v11.800h6M3 7.500h3M3 10.500h2M3 13.500h2M17 4.600v3" /><circle cx="12" cy="11.500" r="4.800" /><circle cx="12" cy="11.500" r="1.800" fill="#444" /></svg>
    </Macro>
    <Access>
      <svg width="18" height="18" viewBox="0 0 18 18" fill="none" stroke="#333" strokeWidth="1.2"><circle cx="8" cy="2.600" r="2" /><path d="M1.500 4q-1 1.500.5 2l3.500 1.200V10L3 16q0 1.500 1.500 1L7.500 12M14.500 4q1 1.500-.5 2l-3.500 1.200V9M10.500 10.500l7 7M17.500 10.500l-7 7" /></svg>
      Accessibility: Investigate
    </Access>
    <Push />
    <ViewButton $on aria-label="Normal view">
      <svg width="17" height="17" viewBox="0 0 17 17" fill="none" stroke="#333" strokeWidth="1.4"><path d="M.7.7h15.600v15.600H.7zM.7 6h15.600M.7 11h15.600M6 .7v15.600M11 .7v15.600" /></svg>
    </ViewButton>
    <ViewButton aria-label="Page layout view">
      <svg width="17" height="17" viewBox="0 0 17 17" fill="none" stroke="#444" strokeWidth="1.4"><path d="M.7.7h15.600v15.600H.7z" /><path d="M4 3.500h9v10H4zM6 6h5M6 8.500h5M6 11h5" /></svg>
    </ViewButton>
    <ViewButton aria-label="Page break view">
      <svg width="17" height="17" viewBox="0 0 17 17" fill="none" stroke="#444" strokeWidth="1.4"><path d="M.7.7h15.600v15.600H.7zM5.500.7V10M10.500.7V10M.7 10h9.800" /></svg>
    </ViewButton>
    <Slot $w={16} aria-label="Zoom out"><svg width="10" height="2"><path d="M0 1h10" stroke="#333" /></svg></Slot>
    <ZoomRange type="range" min={10} max={190} defaultValue={90} aria-label="Zoom" />
    <Slot $w={10} aria-label="Zoom in"><svg width="9" height="9"><path d="M0 4.500h9M4.500 0v9" stroke="#333" /></svg></Slot>
    <ZoomValue>90%</ZoomValue>
  </StatusBar>
);

/* ---------- Windows task bar ---------- */

const TaskBar = styled.footer`
  height: 50px;
  flex: none;
  background: #d2e0eb;
  display: flex;
  align-items: stretch;
  color: #000;
`;
const TaskSlot = styled.button<{ $w: number }>`
  width: ${p => p.$w}px;
  flex: none;
  display: flex;
  align-items: center;
  justify-content: center;
`;
const AppButton = styled(TaskSlot)<{ $run?: boolean }>`
  margin-right: 11px;
  border-top: 3px solid transparent;
  border-bottom: 3px solid ${p => (p.$run ? '#0078d7' : 'transparent')};
`;
const TaskSearch = styled.label`
  width: 359px;
  border: 1px solid #bfc4c8;
  background: #fff;
  display: flex;
  align-items: center;
  padding: 0 22px 0 13px;
  input {
    flex: 1;
    min-width: 0;
    border: 0;
    outline: 0;
    padding: 0;
    margin-left: 15px;
    font-size: 18px;
  }
  input::placeholder { color: #333; opacity: 1; }
`;
const News = styled.button`
  display: flex;
  align-items: center;
  gap: 15px;
  font-size: 17px;
  margin-right: 25px;
`;
const Clock = styled.time`
  width: 84px;
  font-size: 14px;
  line-height: 23px;
  text-align: center;
  padding-top: 2px;
`;
const DesktopPeek = styled.button`
  width: 5px;
  margin-left: 11px;
  border-left: 1px solid #9aa7b1;
`;

const Flower = () => (
  <svg width="56" height="48" viewBox="0 0 56 48">
    <path d="M28 46V22M28 44Q18 38 16 26M28 44q10-6 12-18M28 42Q22 34 20 22M28 42q6-8 8-20" stroke="#2bb5a0" strokeWidth="1.3" fill="none" />
    <path d="M28 1l3 2 3-1.500 1.500 3L39 5l-.5 3.500L40 12l-3 2-1 4-5 1h-6l-5-1-1-4-3-2 1.500-3.500L17 5l3.500-.5L22 1.500 25 3z" fill="#e8602a" />
    <path d="M22 8q6-5 12 0v7H22z" fill="#f4904c" />
    <circle cx="28" cy="16" r="3" fill="#5a1712" />
    {[10, 46].map((x, i) => (
      <g key={x} transform={i ? 'translate(56 0) scale(-1 1)' : undefined}>
        <path d="M12 11q-6-1-9 4-4 5-2 10 2 5 9 6 6 0 8-4 2-9-1-13z" fill="#4c1116" strokeDasharray="2 1" stroke="#4c1116" strokeWidth="1.5" />
        <path d="M12 14q-5 0-7 4-2 5 1 8 6 4 10 1 3-7-4-13z" fill="#e2453c" />
        <path d="M12 18q-4 0-5 4 1 5 6 5 4-4-1-9z" fill="#f2659b" />
        <circle cx="14.500" cy="23.500" r="3" fill="#f6c21c" />
        <path d="M4 31l7 1 7 2-3 4-4 1-2 5-4-3z" fill="#d4421f" />
        <circle cx="14" cy="34.500" r="2.300" fill="#5a1712" />
      </g>
    ))}
    <path d="M22 22l3 4 3-4 3 4 3-4q1 8-6 10-7-2-6-10z" fill="#0e8f80" />
    <path d="M28 47q-6 0-9-7 6 1 9 6 3-5 9-6-3 7-9 7z" fill="#18a999" />
    <path d="M28 46q-3-5 0-10 3 5 0 10z" fill="#6fd6c4" />
  </svg>
);

const apps: { name: string; run?: boolean; art: React.ReactNode }[] = [
  {
    name: 'File Explorer', run: true,
    art: <svg width="28" height="24" viewBox="0 0 28 24"><path d="M0 2Q0 0 2 0h9l3 4H0z" fill="#d89b13" /><rect y="3" width="28" height="20" rx="1.500" fill="#ffd15c" /><path d="M5 23V14q0-2 2-2h14q2 0 2 2v9h-4.500v-5.500h-9V23z" fill="#3a98e0" /></svg>,
  },
  {
    name: 'Snip',
    art: <svg width="28" height="28" viewBox="0 0 28 28" fill="none"><path d="M3 13q-4 4-1 6 3 1.500 9-2" stroke="#e87878" strokeWidth="1.3" /><ellipse cx="14" cy="8" rx="12" ry="7" transform="rotate(-14 14 8)" fill="#f2f4f6" stroke="#e24a4a" strokeWidth="1.5" /><path d="M14 3l2 13M6 9l12 6" stroke="#999" strokeWidth="1.5" /><path d="M17 15q-5 5-2.500 11 5 2 4-6zM17 15q4 7 9 6 3-5-5-7z" stroke="#1e88d0" strokeWidth="2" /></svg>,
  },
  {
    name: 'Opera', run: true,
    art: <svg width="29" height="29" viewBox="0 0 29 29"><defs><linearGradient id="op" x2="1"><stop stopColor="#ff1b2d" /><stop offset=".5" stopColor="#c8101f" /><stop offset="1" stopColor="#ff5560" /></linearGradient></defs><ellipse cx="14.500" cy="14.500" rx="14.300" ry="14.300" fill="url(#op)" /><ellipse cx="14" cy="14.500" rx="6.500" ry="10.500" fill="#d2e0eb" /></svg>,
  },
  {
    name: 'Chrome', run: true,
    art: <svg width="32" height="32" viewBox="0 0 32 32"><circle cx="15" cy="15" r="14.500" fill="#f9c31f" /><path d="M15 .5A14.500 14.500 0 0 1 27.600 7.800H15L8.500 11 2.400 7.800A14.500 14.500 0 0 1 15 .5z" fill="#e33b2e" /><path d="M2.400 7.800 9 19l6 3-3 7A14.500 14.500 0 0 1 2.400 7.800z" fill="#2a9d4a" /><circle cx="15" cy="14.500" r="7" fill="#fff" /><circle cx="15" cy="14.500" r="5.500" fill="#2f7ded" /><circle cx="22.500" cy="22.500" r="9.500" fill="#b9b9b9" stroke="#999" /><path d="M13.500 22.500h18" stroke="#a0a0a0" strokeWidth="1.5" /></svg>,
  },
  {
    name: 'Notepad', run: true,
    art: <svg width="28" height="26" viewBox="0 0 28 26"><path d="M24 2l3 21-4 2-5-1z" fill="#8b7345" /><path d="M10 1h15l-5 20q-6 5-8 3L0 20z" fill="#7fbdcd" /><path d="M10 1h15l-3 11Q12 10 4 14z" fill="#b5dfe9" /><path d="M12 23q9-3 13-14l-3 16-4 1z" fill="#e9eef0" /><path d="M10 1h16" stroke="#667" strokeWidth="2" strokeDasharray="1.500 1" /></svg>,
  },
  {
    name: 'Upwork', run: true,
    art: <svg width="26" height="26" viewBox="0 0 26 26"><circle cx="13" cy="13" r="13" fill="#14a800" /><path d="M4.500 9v4q0 3.200 3 3.200t3-3.200V9q1.500 5.500 4.500 7 5.500 1.500 6-3-.5-3.800-3.500-3.800-3.300.3-4 5L13 18.500" fill="none" stroke="#fff" strokeWidth="2" /></svg>,
  },
  {
    name: 'Photos', run: true,
    art: <svg width="26" height="26" viewBox="0 0 26 26"><defs><linearGradient id="ph" x2="1" y2="1"><stop stopColor="#1269c7" /><stop offset="1" stopColor="#7a55b5" /></linearGradient></defs><rect width="26" height="26" rx="4" fill="url(#ph)" /><path d="M1 23 11 10q2-2 4 0l11 11v1q0 4-4 4H4q-2 0-3-3z" fill="#1b8fe0" /><path d="M1 23 11 10q2-2 4 0L4 26q-2 0-3-3z" fill="#35c2fb" /><circle cx="19.500" cy="4.800" r="2.500" fill="#fff" /></svg>,
  },
  {
    name: 'PowerPoint', run: true,
    art: <svg width="30" height="29" viewBox="0 0 30 29"><circle cx="16" cy="14.500" r="14" fill="#d35230" /><path d="M16 .5a14 14 0 0 1 14 14H16z" fill="#ff8f6b" /><path d="M16 .5v14H2a14 14 0 0 1 14-14z" fill="#ed6c47" /><rect y="6.500" width="16" height="16" rx="1.500" fill="#c43e1c" /><text x="8" y="18.800" textAnchor="middle" fontFamily="Open Sans" fontWeight="700" fontSize="12" fill="#fff">P</text></svg>,
  },
  { name: 'Excel', run: true, art: <ExcelIcon s={29} /> },
];

const Task = () => (
  <TaskBar>
    <TaskSlot $w={61} aria-label="Start">
      <svg width="20" height="20" viewBox="0 0 20 20"><path d="M0 3l8-1.200V9.500H0zM9 1.600 20 0v9.500H9zM0 10.500h8v7.700L0 17zM9 10.500h11V20L9 18.400z" /></svg>
    </TaskSlot>
    <TaskSearch>
      <svg width="20" height="20" viewBox="0 0 20 20" fill="none" stroke="#222" strokeWidth="1.5"><circle cx="12.500" cy="7.500" r="6.500" /><path d="M8 12.500.7 19.500" /></svg>
      <input placeholder="Type here to search" aria-label="Type here to search" />
      <Flower />
    </TaskSearch>
    <TaskSlot $w={60} aria-label="Task view">
      <svg width="20" height="19" viewBox="0 0 20 19" fill="none" stroke="#000" strokeWidth="1.2"><path d="M.6 0v3.500h12V0M.6 5.500h12v8H.6zM.6 19v-3.500h12V19M18.500 0v5M18.500 10v9" /><path d="M17 6h3v3h-3z" fill="#000" stroke="none" /></svg>
    </TaskSlot>
    <Gap $w={8} />
    {apps.map(a => <AppButton key={a.name} $w={51} $run={a.run} aria-label={a.name}>{a.art}</AppButton>)}
    <Push />
    <News>
      <svg width="22" height="30" viewBox="0 0 22 30"><path d="M0 2Q0 0 2 0h12l8 8v20q0 2-2 2H2q-2 0-2-2z" fill="#1ea1ea" /><path d="M14 0l8 8h-8z" fill="#8fd6fb" /><path d="M4 13h3v6H4zM9 16h3v3H9zM14 14h3v5h-3z" fill="#0b5aa8" /><path d="M3 22.500h16M3 26h11" stroke="#fff" strokeWidth="1.6" /></svg>
      Earnings upcoming
    </News>
    <TaskSlot $w={30} aria-label="Hidden icons"><svg width="16" height="9" fill="none"><path d="M.7 8.500 8 1l7.300 7.500" stroke="#000" strokeWidth="1.3" /></svg></TaskSlot>
    <TaskSlot $w={30} aria-label="Meet now">
      <svg width="15" height="18" viewBox="0 0 15 18" fill="none" stroke="#000" strokeWidth="1.2"><rect x="1" y="4.500" width="9" height="9" rx="2" /><path d="M10 7.500l4-2v7l-4-2M2 2q4-2.500 8 0M2 16q4 2.500 8 0" /></svg>
    </TaskSlot>
    <TaskSlot $w={30} aria-label="Volume">
      <svg width="21" height="18" viewBox="0 0 21 18" fill="none" stroke="#000" strokeWidth="1.2"><path d="M.6 6h3L8 2v14l-4.400-4h-3zM11 6q2 3 0 6M14 4q3.500 5 0 10M17 2q5 7 0 14" /></svg>
    </TaskSlot>
    <TaskSlot $w={30} aria-label="Network">
      <svg width="20" height="17" viewBox="0 0 20 17" fill="none" stroke="#000" strokeWidth="1.2"><path d="M5 1.500h14v10H3.500M3 5v11.500M8 15.500h8M12 11.500v4" /><path d="M.6.600h4.400v4.400H.6z" /></svg>
    </TaskSlot>
    <Clock>8:25 AM<br />4/15/2024</Clock>
    <TaskSlot $w={50} aria-label="Notifications">
      <svg width="20" height="20" viewBox="0 0 20 20" fill="none" stroke="#000" strokeWidth="1.2"><path d="M.6.600h18.800v15.400H13l-3 3.300L7 16H.6z" /></svg>
    </TaskSlot>
    <TaskSlot $w={50} aria-label="Copilot">
      <svg width="25" height="25" viewBox="0 0 25 25"><defs><linearGradient id="cp" x2="0" y2="1"><stop stopColor="#1a8fe8" /><stop offset=".6" stopColor="#4fb36a" /><stop offset="1" stopColor="#f0c020" /></linearGradient><linearGradient id="cq" x2="0" y2="1"><stop stopColor="#4f4fe0" /><stop offset=".5" stopColor="#c05ad8" /><stop offset="1" stopColor="#f5784f" /></linearGradient></defs><path d="M8 0h9l-5 15q-1 3-4 3H4q-5 0-4-5L3 4q1-4 5-4z" fill="url(#cp)" /><path d="M15 6h6q5 0 3.500 5L22 17q-1 3-4 3h-8l3-11q1-3 2-3z" fill="url(#cq)" /><path d="M12 0h5q2 0 3 6h-5z" fill="#1b4fd0" /><rect x="5" y="15" width="20" height="10" rx="2" fill="#fdb913" /><text x="15" y="23" textAnchor="middle" fontFamily="Open Sans" fontWeight="700" fontSize="8" fill="#222">PRE</text></svg>
    </TaskSlot>
    <DesktopPeek aria-label="Show desktop" />
  </TaskBar>
);

export default function App() {
  return (
    <Window>
      <Global />
      <Title />
      <Tabs />
      <Ribbon />
      <FormulaBar />
      <Sheet />
      <SheetTabs />
      <Status />
      <Task />
    </Window>
  );
}
